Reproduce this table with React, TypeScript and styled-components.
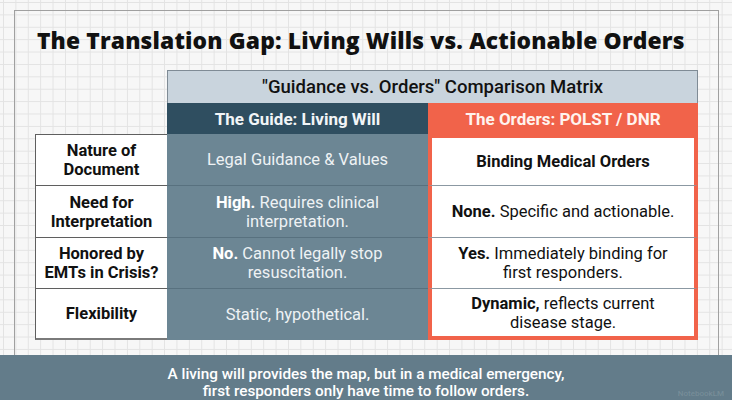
import React from "react";
import styled, { createGlobalStyle } from "styled-components";

const Global = createGlobalStyle`
  html, body { margin: 0; padding: 0; }
  body { width: 732px; height: 400px; overflow: hidden; font-family: Roboto, "Liberation Sans", sans-serif; }
  #root { width: 732px; height: 400px; }
`;

const Page = styled.div`
  width: 732px;
  height: 400px;
  display: flex;
  flex-direction: column;
  background-color: #f7f7f7;
  background-image:
    linear-gradient(to right, #e3e3e3 1px, transparent 1px),
    linear-gradient(to bottom, #e3e3e3 1px, transparent 1px);
  background-size: 12.4px 12.4px;
  background-position: 3px 2px;
  overflow: hidden;
`;

const Frame = styled.div`
  margin: 10px 13px 0 14px;
  height: 347px;
  border: 1px solid #a0a0a0;
  border-bottom: none;
  box-sizing: border-box;
  display: flex;
  flex-direction: column;
  padding: 0 0 0 20px;
`;

const Title = styled.h1`
  margin: 14px 0 0 2px;
  font-family: "Open Sans", sans-serif;
  font-weight: 800;
  font-size: 22.8px;
  line-height: 31px;
  color: #111;
  letter-spacing: 0.15px;
  white-space: nowrap;
`;

const Matrix = styled.div`
  margin-top: 14px;
  display: grid;
  grid-template-columns: 132px 261px 270px;
  grid-template-rows: 33px 31px 51px 52px 51px 52px;
`;

const MatrixHeader = styled.div`
  grid-column: 2 / 4;
  grid-row: 1;
  background: #c9d4dd;
  border: 1px solid #7f8b95;
  border-bottom: none;
  display: flex;
  align-items: center;
  justify-content: center;
  font-size: 18.5px;
  font-weight: 500;
  color: #111;
`;

const ColHeader = styled.div<{ $variant: "guide" | "orders" }>`
  grid-row: 2;
  grid-column: ${(p) => (p.$variant === "guide" ? 2 : 3)};
  background: ${(p) => (p.$variant === "guide" ? "#2f4e60" : "#f1634a")};
  color: ${(p) => (p.$variant === "guide" ? "#f2f5f7" : "#fff3ee")};
  display: flex;
  align-items: center;
  justify-content: center;
  font-size: 17px;
  font-weight: 700;
`;

const LabelCell = styled.div<{ $row: number; $last?: boolean }>`
  grid-column: 1;
  grid-row: ${(p) => p.$row};
  background: #fff;
  border: 1px solid #5f5f5f;
  border-right: none;
  border-bottom: ${(p) => (p.$last ? "2px solid #7a7a7a" : "none")};
  display: flex;
  align-items: center;
  justify-content: center;
  text-align: center;
  font-size: 16.5px;
  font-weight: 700;
  line-height: 19px;
  color: #111;
`;

const GuideCell = styled.div<{ $row: number }>`
  grid-column: 2;
  grid-row: ${(p) => p.$row};
  background: #6c8694;
  border-top: ${(p) => (p.$row === 3 ? "none" : "1px solid #58717f")};
  display: flex;
  align-items: center;
  justify-content: center;
  text-align: center;
  padding: 0 12px;
  font-size: 16.5px;
  line-height: 19px;
  color: #eef2f4;
  b { font-weight: 700; color: #fff; }
`;

const OrderCell = styled.div<{ $row: number; $first?: boolean; $last?: boolean }>`
  grid-column: 3;
  grid-row: ${(p) => p.$row};
  background: #fff;
  border-left: 4px solid #f1634a;
  border-right: 4px solid #f1634a;
  border-top: ${(p) => (p.$first ? "4px solid #f1634a" : "1px solid #8b98a2")};
  border-bottom: ${(p) => (p.$last ? "4px solid #f1634a" : "none")};
  display: flex;
  align-items: center;
  justify-content: center;
  text-align: center;
  padding: 0 8px;
  font-size: 16.5px;
  line-height: 19px;
  color: #111;
  b { font-weight: 700; }
`;

const Caption = styled.div`
  flex: 1;
  background: #637c8a;
  display: flex;
  flex-direction: column;
  align-items: center;
  padding-top: 11px;
  color: #fff;
  font-size: 15.3px;
  font-weight: 500;
  line-height: 17px;
  text-align: center;
  position: relative;
`;

const Watermark = styled.span`
  position: absolute;
  right: 8px;
  bottom: -2px;
  font-size: 8px;
  color: rgba(255, 255, 255, 0.14);
`;

const rows = [
  {
    label: ["Nature of", "Document"],
    guide: <>Legal Guidance &amp; Values</>,
    orders: <b>Binding Medical Orders</b>,
  },
  {
    label: ["Need for", "Interpretation"],
    guide: (
      <>
        <b>High.</b> Requires clinical
        <br />
        interpretation.
      </>
    ),
    orders: (
      <span>
        <b>None.</b> Specific and actionable.
      </span>
    ),
  },
  {
    label: ["Honored by", "EMTs in Crisis?"],
    guide: (
      <>
        <b>No.</b> Cannot legally stop
        <br />
        resuscitation.
      </>
    ),
    orders: (
      <span>
        <b>Yes.</b> Immediately binding for
        <br />
        first responders.
      </span>
    ),
  },
  {
    label: ["Flexibility"],
    guide: <>Static, hypothetical.</>,
    orders: (
      <span>
        <b>Dynamic,</b> reflects current
        <br />
        disease stage.
      </span>
    ),
  },
];

export default function App() {
  return (
    <>
      <Global />
      <Page>
        <Frame>
          <Title>The Translation Gap: Living Wills vs. Actionable Orders</Title>
          <Matrix>
            <MatrixHeader>"Guidance vs. Orders" Comparison Matrix</MatrixHeader>
            <ColHeader $variant="guide">The Guide: Living Will</ColHeader>
            <ColHeader $variant="orders">The Orders: POLST / DNR</ColHeader>
            {rows.map((r, i) => (
              <React.Fragment key={i}>
                <LabelCell $row={i + 3} $last={i === rows.length - 1}>
                  <span>
                    {r.label.map((l, j) => (
                      <React.Fragment key={j}>
                        {j > 0 && <br />}
                        {l}
                      </React.Fragment>
                    ))}
                  </span>
                </LabelCell>
                <GuideCell $row={i + 3}>
                  <span>{r.guide}</span>
                </GuideCell>
                <OrderCell $row={i + 3} $first={i === 0} $last={i === rows.length - 1}>
                  {r.orders}
                </OrderCell>
              </React.Fragment>
            ))}
          </Matrix>
        </Frame>
        <Caption>
          <span>A living will provides the map, but in a medical emergency,</span>
          <span>first responders only have time to follow orders.</span>
          <Watermark>NotebookLM</Watermark>
        </Caption>
      </Page>
    </>
  );
}
